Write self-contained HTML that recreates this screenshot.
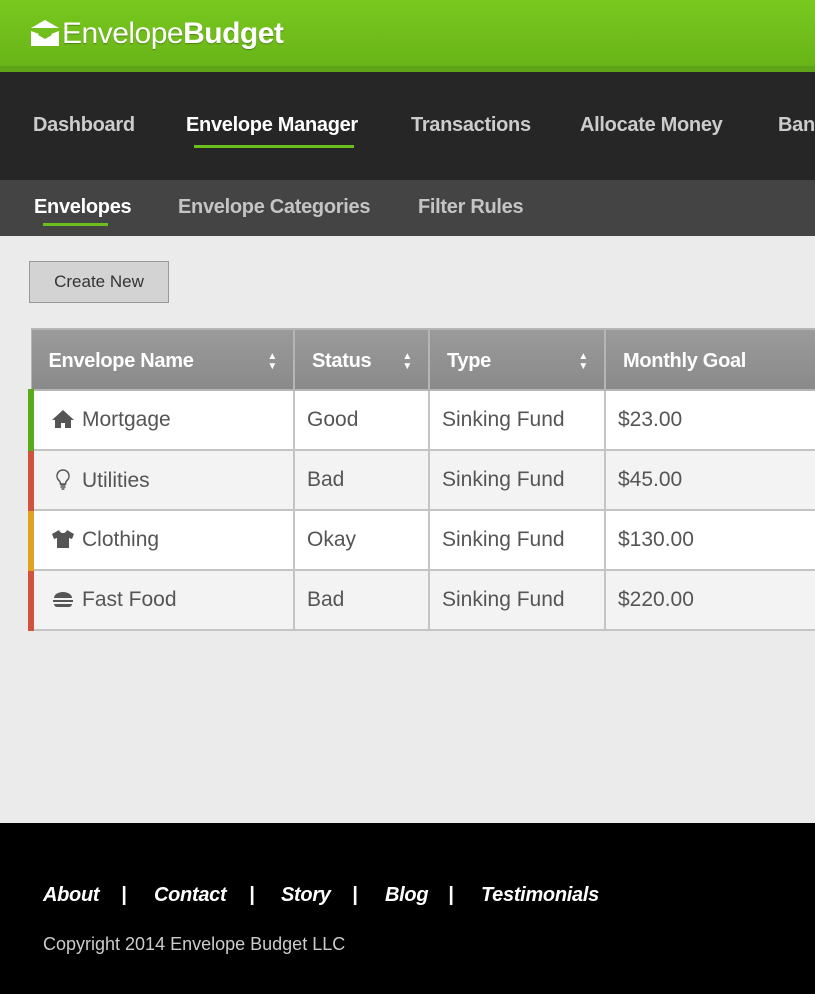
<!DOCTYPE html>
<html><head><style>
*{margin:0;padding:0;box-sizing:border-box}
body{width:815px;height:994px;overflow:hidden;background:#ebebeb;font-family:"Liberation Sans",sans-serif;position:relative}
.hdr{position:absolute;left:0;top:0;width:815px;height:66px;background:linear-gradient(#79c81f,#68b418)}
.hdr2{position:absolute;left:0;top:66px;width:815px;height:6px;background:#5ea318}
.logo{position:absolute;left:62px;top:17px;color:#fff;font-size:30px;letter-spacing:-0.5px;text-shadow:0 1px 1px rgba(0,0,0,.3)}
.nav{position:absolute;top:72px;left:0;width:815px;height:108px;background:#262626}
.nav span{position:absolute;top:42px;font-size:20px;font-weight:bold;color:#ccc;white-space:nowrap;letter-spacing:-0.3px}
.sub{position:absolute;top:180px;left:0;width:815px;height:56px;background:#444}
.sub span{position:absolute;top:16px;font-size:20px;font-weight:bold;color:#c4c4c4;white-space:nowrap;letter-spacing:-0.3px}
.ul{position:absolute;height:3px;background:#6cbf1c}
.btn{position:absolute;left:29px;top:261px;width:140px;height:42px;background:#d3d3d3;border:1px solid #999;font-size:17px;color:#333;text-align:center;line-height:40px}
table{position:absolute;left:28px;top:328px;border-collapse:collapse;width:800px}
th{height:61px;background:linear-gradient(#9a9a9a,#8a8a8a);color:#fff;font-size:20px;text-align:left;padding-left:17px;padding-top:3px;border:2px solid #b5b5b5;position:relative;letter-spacing:-0.3px}
th:first-child{border-left-width:1px}
td{height:60px;font-size:21px;color:#555;padding-left:12px;border:2px solid #c4c4c4}
tr:nth-child(odd) td{background:#f3f3f3}
tr.w td{background:#fff}
td.n{padding-left:17px;border-left:6px solid}
.ar{position:absolute;right:16px;top:22px;font-size:10px;line-height:10px;color:#fff}
.ic{display:inline-block;width:24px;margin-right:7px;vertical-align:-3px}
.ft{position:absolute;left:0;top:823px;width:815px;height:171px;background:#000;color:#fff}
.ft span{position:absolute;top:61px;font-size:20px;font-style:italic;font-weight:bold;white-space:nowrap;letter-spacing:-0.3px}
.cp{position:absolute;top:111px;left:43px;font-size:18px;color:#ccc}
</style></head><body>
<div class="hdr"></div><div class="hdr2"></div>
<svg style="position:absolute;left:30px;top:20px" width="30" height="26" viewBox="0 0 30 26"><path d="M15 0L29 8H1Z" fill="#fff"/><path d="M1 11L15 19L29 11V26H1Z" fill="#fff"/><path d="M1 11l8 3-8 8z M29 11l-8 3 8 8z" fill="#fff"/></svg>
<div class="logo">Envelope<b>Budget</b></div>
<div class="nav">
<span style="left:33px">Dashboard</span>
<span style="left:186px;color:#fff">Envelope Manager</span>
<span style="left:411px">Transactions</span>
<span style="left:580px">Allocate Money</span>
<span style="left:778px">Bank</span>
<div class="ul" style="left:194px;top:73px;width:160px"></div>
</div>
<div class="sub">
<span style="left:34px;color:#fff">Envelopes</span>
<span style="left:178px">Envelope Categories</span>
<span style="left:418px">Filter Rules</span>
<div class="ul" style="left:43px;top:43px;width:65px"></div>
</div>
<div class="btn">Create New</div>
<table>
<tr><th style="width:263px">Envelope Name<span class="ar">▲<br>▼</span></th><th style="width:135px">Status<span class="ar">▲<br>▼</span></th><th style="width:176px">Type<span class="ar">▲<br>▼</span></th><th>Monthly Goal</th></tr>
<tr class="w"><td class="n" style="border-left-color:#5aaa1a"><svg class="ic" viewBox="0 0 24 20" height="20"><path d="M12 1L1 11h3v8h6v-5h4v5h6v-8h3z" fill="#555"/></svg>Mortgage</td><td>Good</td><td>Sinking Fund</td><td>$23.00</td></tr>
<tr><td class="n" style="border-left-color:#d0533f"><svg class="ic" viewBox="0 0 24 22" height="22"><path d="M12 2a6 6 0 0 0-4 10.5c1 1 1.5 2 1.5 3.5h5c0-1.5.5-2.5 1.5-3.5A6 6 0 0 0 12 2z" fill="none" stroke="#555" stroke-width="1.5"/><path d="M9.5 17h5M9.5 19h5M10.5 21h3" stroke="#555" stroke-width="1.5"/></svg>Utilities</td><td>Bad</td><td>Sinking Fund</td><td>$45.00</td></tr>
<tr class="w"><td class="n" style="border-left-color:#dea322"><svg class="ic" viewBox="0 0 24 20" height="20"><path d="M8 1L1 5l2 5 3-1v10h12V9l3 1 2-5-7-4c-1 2-2 3-4 3S9 3 8 1z" fill="#555"/></svg>Clothing</td><td>Okay</td><td>Sinking Fund</td><td>$130.00</td></tr>
<tr><td class="n" style="border-left-color:#d0533f"><svg class="ic" viewBox="0 0 24 20" height="20"><path d="M3 9a9 6 0 0 1 18 0z M2 11h20v2H2z M3 15h18a3 3 0 0 1-3 3H6a3 3 0 0 1-3-3z" fill="#555"/></svg>Fast Food</td><td>Bad</td><td>Sinking Fund</td><td>$220.00</td></tr>
</table>
<div class="ft">
<span style="left:43px">About</span><span style="left:121px">|</span>
<span style="left:154px">Contact</span><span style="left:249px">|</span>
<span style="left:281px">Story</span><span style="left:352px">|</span>
<span style="left:385px">Blog</span><span style="left:448px">|</span>
<span style="left:481px">Testimonials</span>
<div class="cp">Copyright 2014 Envelope Budget LLC</div>
</div>
</body></html>
